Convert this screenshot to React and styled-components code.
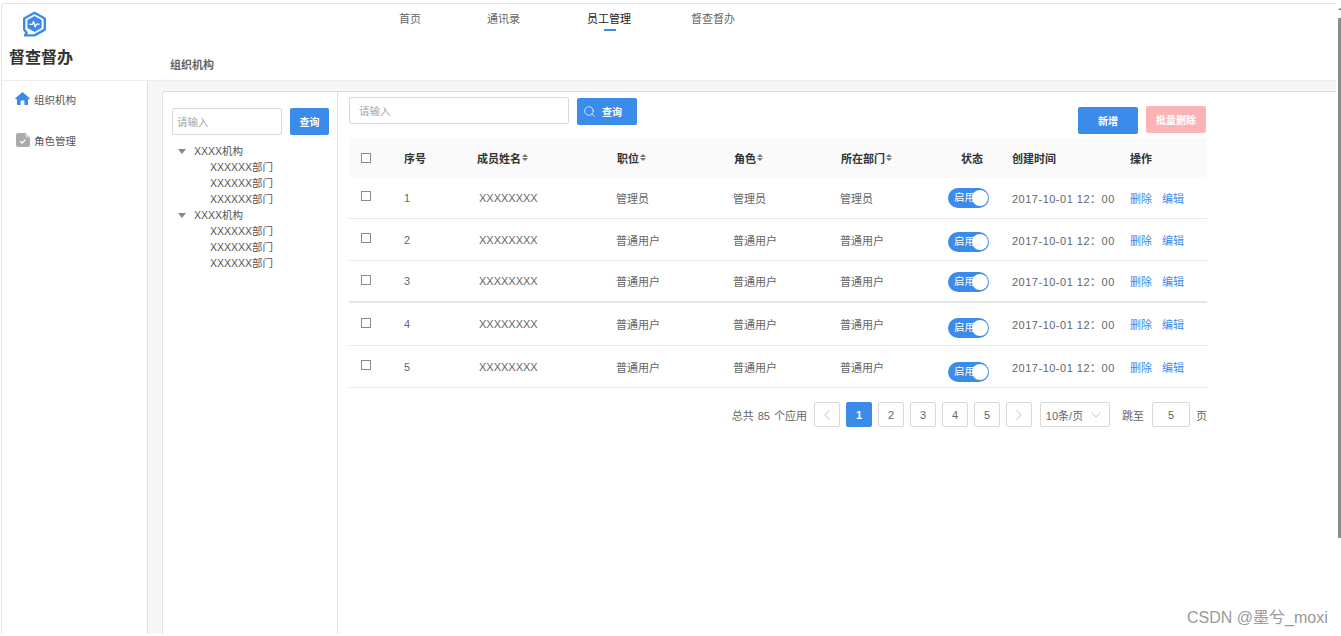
import styled, { createGlobalStyle } from "styled-components";
import { Search, ChevronLeft, ChevronRight, ChevronDown } from "lucide-react";

const BLUE = "#3a8bea";
const FONT = `"Liberation Sans", "Noto Sans CJK SC", sans-serif`;

const GlobalStyle = createGlobalStyle`
    html, body {
        margin: 0;
        height: 100%;
        overflow: hidden;
        background: #fff;
    }
    body {
        font-family: ${FONT};
        font-size: 11px;
        color: #666;
    }
    * {
        box-sizing: border-box;
    }
`;

const Page = styled.div`
    position: relative;
    width: 1341px;
    height: 636px;
    padding: 3px 5px 2px 1px;
`;

const Frame = styled.div`
    height: 100%;
    display: flex;
    flex-direction: column;
    border-top: 1px solid #e2e4e8;
    border-left: 1px solid #e2e4e8;
    border-top-left-radius: 4px;
`;

const Header = styled.header`
    height: 77px;
    flex-shrink: 0;
    display: flex;
    border-bottom: 1px solid #eceef1;
`;

const Brand = styled.div`
    width: 146px;
    flex-shrink: 0;
    padding: 7px 0 0 7px;
`;

const LogoBox = styled.div`
    width: 50px;
    display: flex;
    justify-content: center;
    svg {
        display: block;
    }
`;

const BrandName = styled.div`
    margin-top: 9px;
    font-size: 16px;
    line-height: 22px;
    font-weight: 700;
    color: #333;
`;

const HeaderBody = styled.div`
    flex: 1;
    display: flex;
    flex-direction: column;
`;

const Nav = styled.nav`
    height: 53px;
    display: flex;
    padding: 7px 0 0 251px;
`;

const NavItem = styled.div`
    position: relative;
    width: ${(p) => p.$width}px;
    height: 16px;
    line-height: 16px;
    color: ${(p) => (p.$active ? "#222" : "#666")};
    white-space: nowrap;

    ${(p) =>
        p.$active &&
        `
        &::after {
            content: "";
            position: absolute;
            left: 17px;
            top: 18px;
            width: 12px;
            height: 2px;
            background: ${BLUE};
        }
    `}
`;

const Crumb = styled.div`
    padding-left: 22px;
    line-height: 16px;
    font-weight: 700;
    color: #666;
`;

const Body = styled.div`
    flex: 1;
    display: flex;
    min-height: 0;
`;

const Sidebar = styled.aside`
    width: 146px;
    flex-shrink: 0;
    padding-top: 9px;
    border-right: 1px solid #dcdfe4;
`;

const SideItem = styled.div`
    height: 20px;
    margin-bottom: 21px;
    padding-left: 13px;
    display: flex;
    align-items: center;
    gap: 4px;
    font-size: 10.5px;
    line-height: 20px;
    color: #555;
`;

const SideIcon = styled.span`
    width: 15px;
    display: flex;
    justify-content: center;
    margin-bottom: ${(p) => p.$lift}px;
`;

const Content = styled.div`
    flex: 1;
    min-width: 0;
    padding: 10px 0 0 14px;
    background: #f5f6f8;
`;

const Panel = styled.div`
    height: 100%;
    display: flex;
    background: #fff;
    border-top: 1px solid #dcdcdc;
    border-left: 1px solid #e2e2e2;
    border-top-left-radius: 3px;
`;

const TreePane = styled.div`
    width: 175px;
    flex-shrink: 0;
    padding: 16px 0 0 9px;
    border-right: 1px solid #dfdfdf;
    font-size: 10.5px;
`;

const TreeSearch = styled.div`
    display: flex;
    gap: 8px;
    margin-bottom: 8px;
`;

const TextBox = styled.div`
    width: ${(p) => p.$width}px;
    height: 27px;
    padding-left: ${(p) => p.$pad}px;
    font-size: 10.5px;
    line-height: 26px;
    color: #a5a5a5;
    background: #fff;
    border: 1px solid #d9d9d9;
    border-radius: 2px;
`;

const BlueButton = styled.div`
    width: ${(p) => p.$width}px;
    height: 27px;
    margin-top: ${(p) => p.$drop || 0}px;
    display: flex;
    align-items: center;
    justify-content: ${(p) => (p.$icon ? "flex-start" : "center")};
    gap: 6px;
    padding-left: ${(p) => (p.$icon ? "6px" : "0")};
    font-size: 10px;
    font-weight: 700;
    color: #fff;
    background: ${(p) => p.$bg || BLUE};
    border-radius: 2px;
`;

const TreeRow = styled.div`
    height: 16px;
    display: flex;
    align-items: center;
    padding-left: ${(p) => (p.$child ? "38px" : "6px")};
    line-height: 16px;
    color: #555;
`;

const Caret = styled.span`
    width: 0;
    height: 0;
    margin-right: 8px;
    border-left: 4.5px solid transparent;
    border-right: 4.5px solid transparent;
    border-top: 5px solid #888;
`;

const MainPane = styled.div`
    flex: 1;
    min-width: 0;
    padding: 5px 0 0 11px;
`;

const Toolbar = styled.div`
    width: 858px;
    height: 41px;
    display: flex;
    justify-content: space-between;
`;

const SearchGroup = styled.div`
    display: flex;
    gap: 8px;
`;

const ActionGroup = styled.div`
    display: flex;
    gap: 8px;
    margin: 9px 1px 0 0;
`;

const columns = "55px 73px 140px 117px 107px 107px 64px 118px 77px";

const TableHead = styled.div`
    width: 858px;
    height: 39px;
    display: grid;
    grid-template-columns: ${columns};
    align-items: center;
    background: #fafafa;
    color: #333;
    font-weight: 700;
`;

const TableRow = styled.div`
    width: 858px;
    height: ${(p) => p.$height}px;
    display: grid;
    grid-template-columns: ${columns};
    align-items: center;
    border-bottom: ${(p) => (p.$thick ? "2px solid #e6e6e6" : "1px solid #e8e8e8")};
`;

const Cell = styled.div`
    display: flex;
    align-items: center;
    white-space: nowrap;
    padding-left: ${(p) => p.$pad || 0}px;
`;

const NameCell = styled(Cell)`
    margin-left: -1px;
`;

const Check = styled.span`
    width: 10px;
    height: 10px;
    margin: 0 0 ${(p) => p.$lift}px 12px;
    background: #fff;
    border: 1px solid #8c8c8c;
`;

const SortMark = styled.span`
    display: inline-flex;
    flex-direction: column;
    gap: 1px;
    margin-left: 1px;

    &::before,
    &::after {
        content: "";
        width: 0;
        height: 0;
        border-left: 3px solid transparent;
        border-right: 3px solid transparent;
    }
    &::before {
        border-bottom: 3px solid #777;
    }
    &::after {
        border-top: 3px solid #777;
    }
`;

const Toggle = styled.div`
    position: relative;
    width: 41px;
    height: 20px;
    margin-top: ${(p) => p.$drop}px;
    padding-left: 6px;
    font-size: 10.5px;
    line-height: 19px;
    color: #fff;
    background: ${BLUE};
    border-radius: 10px;

    &::after {
        content: "";
        position: absolute;
        right: 1px;
        top: 2px;
        width: 16px;
        height: 16px;
        background: #fff;
        border-radius: 50%;
    }
`;

const DateText = styled.span`
    letter-spacing: 0.5px;
`;

const LinkText = styled.span`
    color: ${BLUE};
    margin-right: 10px;
`;

const Pager = styled.div`
    width: 858px;
    display: flex;
    justify-content: flex-end;
    align-items: center;
    margin-top: 14px;
    height: 25px;
`;

const PagerNote = styled.span`
    margin-right: ${(p) => p.$gap}px;
    white-space: nowrap;
    word-spacing: 1px;
`;

const PageBox = styled.div`
    width: ${(p) => p.$width || 26}px;
    height: 25px;
    margin-right: ${(p) => p.$gap ?? 6}px;
    display: flex;
    align-items: center;
    justify-content: center;
    color: ${(p) => (p.$active ? "#fff" : "#666")};
    font-weight: ${(p) => (p.$active ? 700 : 400)};
    background: ${(p) => (p.$active ? BLUE : "#fff")};
    border: 1px solid ${(p) => (p.$active ? BLUE : "#d9d9d9")};
    border-radius: 2px;
    gap: 5px;
`;

const Watermark = styled.div`
    position: absolute;
    left: 1187px;
    top: 608px;
    font-size: 16px;
    line-height: 20px;
    color: #9a9a9a;
    white-space: nowrap;
`;

const ScrollThumb = styled.div`
    position: absolute;
    right: 0;
    top: 18px;
    width: 3px;
    height: 520px;
    background: #8a8a8a;

    &::before {
        content: "";
        position: absolute;
        left: 0;
        top: -10px;
        width: 0;
        height: 0;
        border-left: 2px solid transparent;
        border-right: 2px solid transparent;
        border-bottom: 2px solid #777;
    }
`;

const Logo = () => (
    <svg width="25" height="27" viewBox="0 0 25 27" fill="none">
        <path
            d="M12.5 1.8 L22.8 7.5 V18.6 L12.5 24.4 H3 L4.6 21.8 L2.2 18.6 V7.5 Z"
            stroke={BLUE}
            strokeWidth="2.4"
            strokeLinejoin="round"
        />
        <path d="M12.5 5 L19.6 9.1 V17 L12.5 21 L5.4 17 V9.1 Z" fill={BLUE} />
        <path
            d="M7.4 13.4 H10.4 L11.6 10.6 L13.2 15.8 L14.4 13.2 H17.6"
            stroke="#fff"
            strokeWidth="1.3"
            strokeLinejoin="round"
        />
    </svg>
);

const HomeIcon = () => (
    <svg width="15" height="13" viewBox="0 0 15 13">
        <path
            d="M7.5 0 L15 6.4 L13.8 7.6 L13 7 V13 H9.4 V8.4 H5.6 V13 H2 V7 L1.2 7.6 L0 6.4 Z"
            fill={BLUE}
        />
    </svg>
);

const DocIcon = () => (
    <svg width="14" height="14" viewBox="0 0 14 14">
        <path
            d="M2 0 H9.5 L14 4.5 V12 A2 2 0 0 1 12 14 H2 A2 2 0 0 1 0 12 V2 A2 2 0 0 1 2 0 Z"
            fill="#a9abae"
        />
        <path d="M9.5 0 V3 A1.5 1.5 0 0 0 11 4.5 H14 Z" fill="#d6d7d9" />
        <path d="M4.2 8.2 L6 10 L9.4 6.8" stroke="#fff" strokeWidth="1.3" fill="none" />
    </svg>
);

const navItems = [
    { label: "首页", width: 88 },
    { label: "通讯录", width: 100 },
    { label: "员工管理", width: 104, active: true },
    { label: "督查督办", width: 60 },
];

const treeData = ["XXXX机构", "XXXX机构"];
const departments = ["XXXXXX部门", "XXXXXX部门", "XXXXXX部门"];

const rows = [
    { id: 1, name: "管理员", height: 42, drop: 0 },
    { id: 2, name: "普通用户", height: 42, drop: 4 },
    { id: 3, name: "普通用户", height: 42, drop: 2, thick: true },
    { id: 4, name: "普通用户", height: 43, drop: 8 },
    { id: 5, name: "普通用户", height: 42, drop: 10 },
];

const App = () => {
    return (
        <Page>
            <GlobalStyle />
            <Frame>
                <Header>
                    <Brand>
                        <LogoBox>
                            <Logo />
                        </LogoBox>
                        <BrandName>督查督办</BrandName>
                    </Brand>
                    <HeaderBody>
                        <Nav>
                            {navItems.map((item) => (
                                <NavItem
                                    key={item.label}
                                    $width={item.width}
                                    $active={item.active}
                                >
                                    {item.label}
                                </NavItem>
                            ))}
                        </Nav>
                        <Crumb>组织机构</Crumb>
                    </HeaderBody>
                </Header>
                <Body>
                    <Sidebar>
                        <SideItem>
                            <SideIcon $lift={4}>
                                <HomeIcon />
                            </SideIcon>
                            组织机构
                        </SideItem>
                        <SideItem>
                            <SideIcon $lift={2}>
                                <DocIcon />
                            </SideIcon>
                            角色管理
                        </SideItem>
                    </Sidebar>
                    <Content>
                        <Panel>
                            <TreePane>
                                <TreeSearch>
                                    <TextBox $width={110} $pad={4}>
                                        请输入
                                    </TextBox>
                                    <BlueButton $width={39}>查询</BlueButton>
                                </TreeSearch>
                                {treeData.map((org, i) => (
                                    <div key={i}>
                                        <TreeRow>
                                            <Caret />
                                            {org}
                                        </TreeRow>
                                        {departments.map((dep, j) => (
                                            <TreeRow key={j} $child>
                                                {dep}
                                            </TreeRow>
                                        ))}
                                    </div>
                                ))}
                            </TreePane>
                            <MainPane>
                                <Toolbar>
                                    <SearchGroup>
                                        <TextBox $width={220} $pad={9}>
                                            请输入
                                        </TextBox>
                                        <BlueButton $width={60} $drop={1} $icon>
                                            <Search size={13} strokeWidth={1.4} />
                                            查询
                                        </BlueButton>
                                    </SearchGroup>
                                    <ActionGroup>
                                        <BlueButton $width={60} $drop={1}>
                                            新增
                                        </BlueButton>
                                        <BlueButton $width={60} $bg="#fbb4b6">
                                            批量删除
                                        </BlueButton>
                                    </ActionGroup>
                                </Toolbar>
                                <TableHead>
                                    <Cell>
                                        <Check $lift={0} />
                                    </Cell>
                                    <Cell>序号</Cell>
                                    <Cell>
                                        成员姓名
                                        <SortMark />
                                    </Cell>
                                    <Cell>
                                        职位
                                        <SortMark />
                                    </Cell>
                                    <Cell>
                                        角色
                                        <SortMark />
                                    </Cell>
                                    <Cell>
                                        所在部门
                                        <SortMark />
                                    </Cell>
                                    <Cell $pad={13}>状态</Cell>
                                    <Cell>创建时间</Cell>
                                    <Cell>操作</Cell>
                                </TableHead>
                                {rows.map((row) => (
                                    <TableRow
                                        key={row.id}
                                        $height={row.height}
                                        $thick={row.thick}
                                    >
                                        <Cell>
                                            <Check $lift={3} />
                                        </Cell>
                                        <Cell>{row.id}</Cell>
                                        <Cell $pad={2}>XXXXXXXX</Cell>
                                        <NameCell>{row.name}</NameCell>
                                        <NameCell>{row.name}</NameCell>
                                        <NameCell>{row.name}</NameCell>
                                        <Cell>
                                            <Toggle $drop={row.drop}>启用</Toggle>
                                        </Cell>
                                        <Cell>
                                            <DateText>2017-10-01 12：00</DateText>
                                        </Cell>
                                        <Cell>
                                            <LinkText>删除</LinkText>
                                            <LinkText>编辑</LinkText>
                                        </Cell>
                                    </TableRow>
                                ))}
                                <Pager>
                                    <PagerNote $gap={7}>总共 85 个应用</PagerNote>
                                    <PageBox>
                                        <ChevronLeft size={18} strokeWidth={1} color="#aaa" />
                                    </PageBox>
                                    <PageBox $active>1</PageBox>
                                    <PageBox>2</PageBox>
                                    <PageBox>3</PageBox>
                                    <PageBox>4</PageBox>
                                    <PageBox>5</PageBox>
                                    <PageBox $gap={8}>
                                        <ChevronRight size={18} strokeWidth={1} color="#aaa" />
                                    </PageBox>
                                    <PageBox $width={70} $gap={12}>
                                        10条/页
                                        <ChevronDown size={16} strokeWidth={1} color="#aaa" />
                                    </PageBox>
                                    <PagerNote $gap={8}>跳至</PagerNote>
                                    <PageBox $width={38} $gap={6}>
                                        5
                                    </PageBox>
                                    <PagerNote $gap={0}>页</PagerNote>
                                </Pager>
                            </MainPane>
                        </Panel>
                    </Content>
                </Body>
            </Frame>
            <ScrollThumb />
            <Watermark>CSDN @墨兮_moxi</Watermark>
        </Page>
    );
};

export default App;
